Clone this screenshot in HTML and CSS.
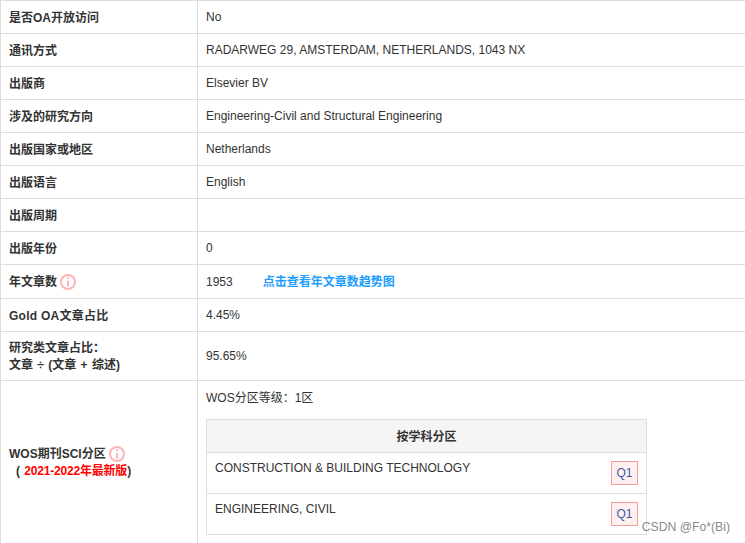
FILE: index.html
```html
<!DOCTYPE html>
<html lang="zh">
<head>
<meta charset="utf-8">
<title>期刊信息</title>
<link rel="stylesheet" href="styles.css">
</head>
<body>
<table class="info">
<colgroup><col class="col-label"><col class="col-value"></colgroup>
<tr><th>是否OA开放访问</th><td>No</td></tr>
<tr><th>通讯方式</th><td>RADARWEG 29, AMSTERDAM, NETHERLANDS, 1043 NX</td></tr>
<tr><th>出版商</th><td>Elsevier BV</td></tr>
<tr><th>涉及的研究方向</th><td>Engineering-Civil and Structural Engineering</td></tr>
<tr><th>出版国家或地区</th><td>Netherlands</td></tr>
<tr><th>出版语言</th><td>English</td></tr>
<tr><th>出版周期</th><td></td></tr>
<tr><th>出版年份</th><td>0</td></tr>
<tr class="row-34"><th>年文章数 <svg class="tip" viewBox="0 0 16 16"><circle cx="8" cy="8" r="7"/><path d="M8 3.6v1.4M8 6.6v5.8"/></svg></th><td>1953<a class="trend" href="#">点击查看年文章数趋势图</a></td></tr>
<tr><th class="gold">Gold OA文章占比</th><td>4.45%</td></tr>
<tr class="row-49"><th>研究类文章占比：<br><span class="formula">文章 ÷ (文章 + 综述)</span></th><td>95.65%</td></tr>
<tr>
<th class="wos-label"><span class="wos-name">WOS期刊SCI分区</span> <svg class="tip" viewBox="0 0 16 16"><circle cx="8" cy="8" r="7"/><path d="M8 3.6v1.4M8 6.6v5.8"/></svg><br><span class="paren">( <em>2021-2022年最新版</em>)</span></th>
<td class="wos">
<p class="grade">WOS分区等级：1区</p>
<table class="sub">
<tr><th class="sub-head">按学科分区</th></tr>
<tr><td class="sub-cell"><div class="sub-row"><span>CONSTRUCTION &amp; BUILDING TECHNOLOGY</span><span class="q">Q1</span></div></td></tr>
<tr><td class="sub-cell"><div class="sub-row"><span>ENGINEERING, CIVIL</span><span class="q">Q1</span></div></td></tr>
</table>
</td>
</tr>
</table>
<div class="mark">CSDN @Fo*(Bi)</div>
</body>
</html>
```
FILE: styles.css
```css
html, body { margin: 0; padding: 0; height: 543px; overflow: hidden; background: #fff; }
body { position: relative; font-family: "Liberation Sans", "Noto Sans CJK SC", sans-serif; font-size: 12px; color: #333; }
.info { border-collapse: collapse; width: 760px; table-layout: fixed; }
.col-label { width: 197px; }
.info > tbody > tr > th, .info > tbody > tr > td { border: 1px solid #ddd; height: 32px; padding: 0 8px; box-sizing: content-box; vertical-align: middle; text-align: left; line-height: 17px; }
.info > tbody > tr > th { font-weight: 700; height: 30px; padding-top: 2px; }
.info > tbody > tr.row-34 > th { height: 31px; }
.info > tbody > tr.row-34 > td { height: 32px; padding-top: 1px; }
.info > tbody > tr.row-49 > th { height: 46px; }
.gold { letter-spacing: 0.25px; }
.formula { word-spacing: 1px; }
.wos-name { letter-spacing: 0; }
.tip { width: 16px; height: 16px; vertical-align: -4px; fill: none; stroke: #fdb4b4; stroke-width: 2; }
.trend { margin-left: 30px; color: #1e9cff; font-weight: 700; text-decoration: none; }
.paren { margin-left: 7px; }
.paren em { font-style: normal; color: #f00; margin-left: 1px; letter-spacing: -0.2px; }
.info > tbody > tr > td.wos { padding: 9px 8px 8px; vertical-align: top; }
.grade { margin: 0 0 12px; line-height: 17px; }
.sub { border-collapse: collapse; width: 441px; }
.sub-head { height: 30px; background: #f5f5f5; border: 1px solid #ddd; text-align: center; font-weight: 700; padding: 2px 0 0; }
.sub-cell { border: 1px solid #ddd; padding: 7px 8px 0; height: 33px; vertical-align: top; }
.sub-row { display: flex; justify-content: space-between; align-items: flex-start; }
.q { margin-top: 1px; width: 25px; height: 22px; line-height: 22px; border: 1px solid #fa9c9c; background: #fff0f0; color: #3d5aa8; text-align: center; }
.mark { position: absolute; right: 15px; bottom: 9px; color: #8a8a8a; font-size: 12.2px; text-shadow: 0 0 2px #fff; }
```
